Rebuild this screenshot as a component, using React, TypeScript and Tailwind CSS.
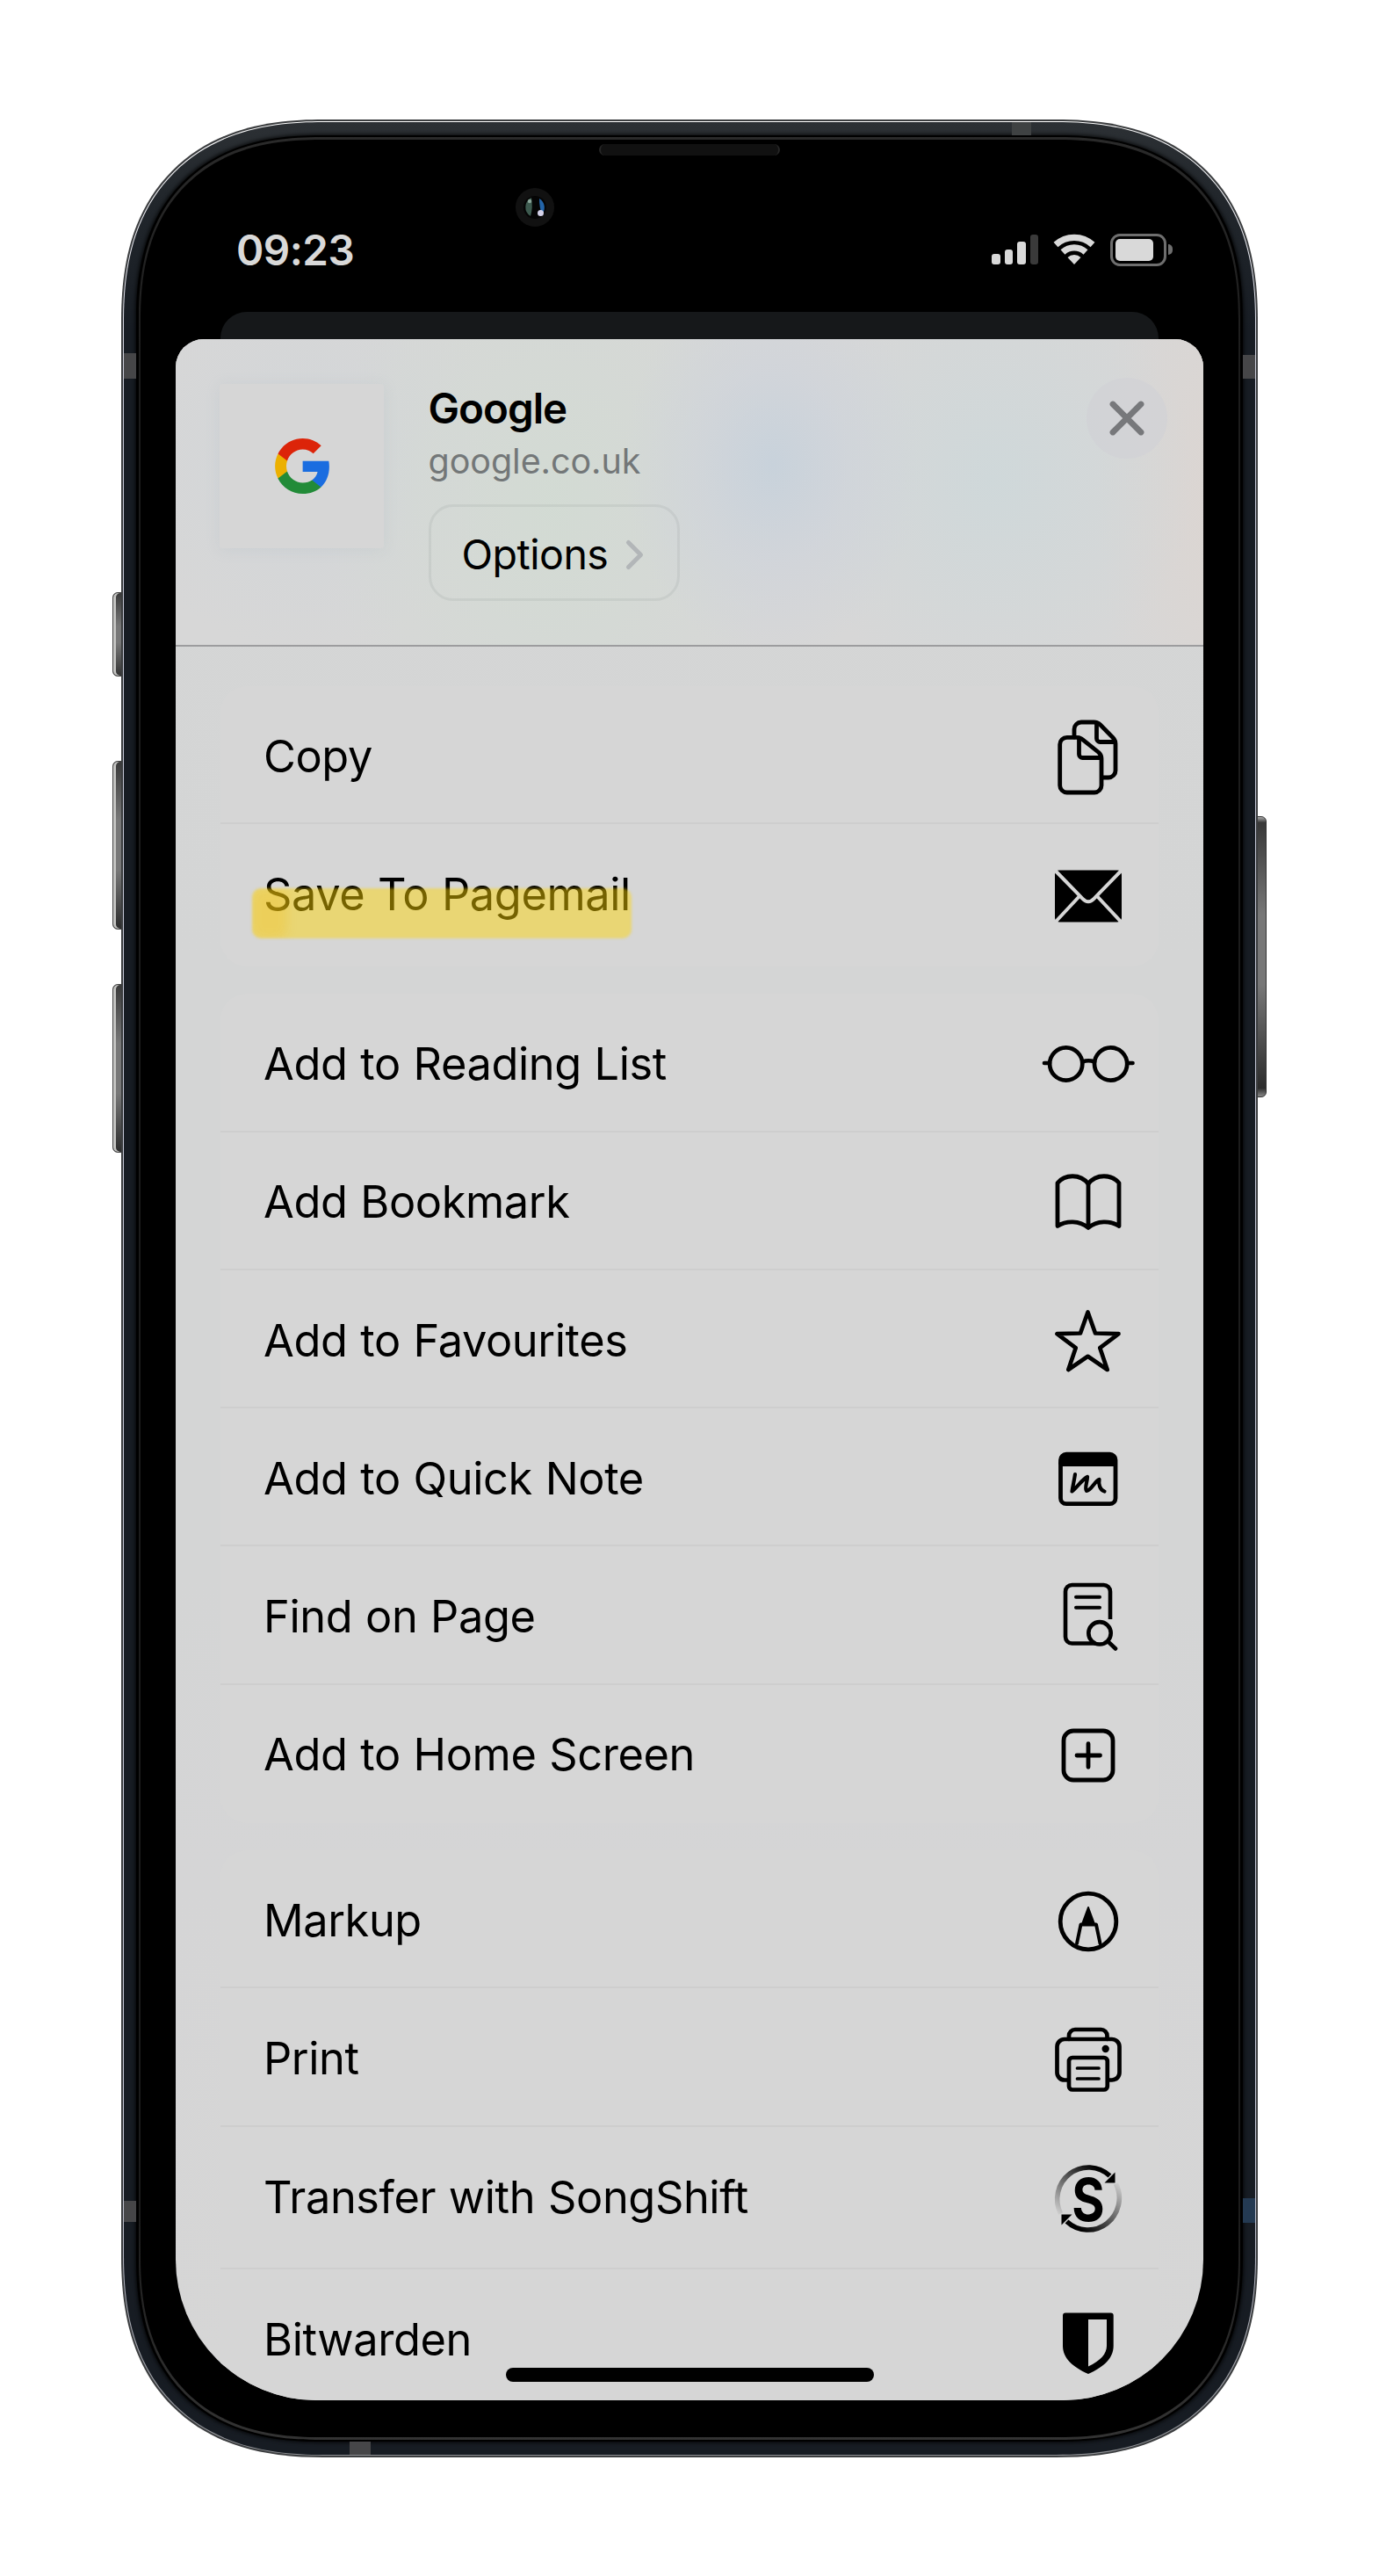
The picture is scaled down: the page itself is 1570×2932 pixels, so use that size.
import React from "react";

const paper = "#d6d6d6";

function Icon({ children, width = 4.8 }: { children: React.ReactNode; width?: number }) {
  return (
    <svg
      width="120"
      height="100"
      viewBox="-60 -50 120 100"
      fill="none"
      stroke="#000"
      strokeWidth={width}
      strokeLinecap="round"
      strokeLinejoin="round"
      className="shrink-0"
    >
      {children}
    </svg>
  );
}

const CopyIcon = () => (
  <Icon>
    <path d="M-16 -21V-30a8 8 0 0 1 8-8H6.500c3 0 5 .8 7 2.800L28 -20.500c2 2 3 4 3 7V17a8 8 0 0 1-8 8H15.500" />
    <path d="M9.500 -37V-19.500a4 4 0 0 0 4 4H30" />
    <path d="M-24.300 -20.700H-13c3 0 5 .8 7 2.800L12 -3.500c2 2 3 4 3 7V34a8 8 0 0 1-8 8H-24.300a8 8 0 0 1-8-8V-12.700a8 8 0 0 1 8-8Z" />
    <path d="M-10.500 -20V-1.500a4 4 0 0 0 4 4H14" />
  </Icon>
);

const MailIcon = () => (
  <Icon>
    <rect x="-38" y="-28.500" width="76" height="59" rx="5" fill="#000" stroke="none" />
    <g stroke={paper} strokeWidth="4" strokeLinecap="butt">
      <path d="M-38 -28.500L-6.500 3.800Q0 10.500 6.500 3.800L38 -28.500" />
      <path d="M-38 31L-10 1M38 31L10 1" />
    </g>
  </Icon>
);

const GlassesIcon = () => (
  <Icon width={4.7}>
    <circle cx="-25.300" cy="1" r="18.600" />
    <circle cx="25.600" cy="1" r="18.600" />
    <path d="M-6.500 -1.500Q0 -4 7 -1.500M-50 0H-44M44.500 0H50.500" />
  </Icon>
);

const BookIcon = () => (
  <Icon>
    <path d="M0 -19.500C-9 -31.500 -27 -30.500 -35 -20.500V28.500C-25 22 -10 22 0 30.500C10 22 25 22 35 28.500V-20.500C27 -30.500 9 -31.500 0 -19.500Z" />
    <path d="M0 -19V29" />
  </Icon>
);

const StarIcon = () => (
  <Icon width={4.7}>
    <path d="M-.5 -31.500L8 -7.500L34.500 -6.800L13.300 9.200L21.700 34L-.5 18.800L-22.700 34L-14.300 9.200L-35.500 -6.800L-9 -7.500Z" />
  </Icon>
);

const QuickNoteIcon = () => (
  <Icon>
    <rect x="-31.500" y="-26.800" width="62.500" height="56.500" rx="6.500" />
    <path d="M-31 -13V-21q0-6 6-6H24.500q6 0 6 6V-13Z" fill="#000" stroke="none" />
    <path d="M-31.500 -16.500H30.500" />
    <path
      d="M-15 -4C-16 3 -17.500 9 -18.500 15.500C-12 10 -7 2 -1 -1C-1 5 -4.500 11 -2 15C4 14 7 4 12.500 2C11.500 7 13 14 18.500 15.500"
      strokeWidth="4.200"
    />
  </Icon>
);

const FindIcon = () => (
  <Icon width={4.6}>
    <path d="M8 31.500H-18.500a7.500 7.500 0 0 1-7.500-7.500V-27.500a7.500 7.500 0 0 1 7.500-7.500H17.500a7.500 7.500 0 0 1 7.500 7.500V4" strokeLinecap="butt" />
    <path d="M-14 -21.300H13M-14 -9.300H13" strokeWidth="4" />
    <circle cx="13" cy="19.800" r="12.700" />
    <path d="M22.500 29.300L31 37.500" />
  </Icon>
);

const PlusIcon = () => (
  <Icon width={4.8}>
    <rect x="-28" y="-26" width="56" height="56" rx="11" />
    <path d="M-13 2H13.500M0 -11.300V15.300" />
  </Icon>
);

const MarkupIcon = () => (
  <Icon>
    <circle cx="0" cy="2" r="31.800" />
    <path d="M0 -14L7 5H-7Z" fill="#000" strokeWidth="2" />
    <path d="M-13 27L-8.500 5.500H9L13.500 27" strokeWidth="3.900" />
  </Icon>
);

const PrinterIcon = () => (
  <Icon width={4.7}>
    <path d="M-22 -21V-25a7 7 0 0 1 7-7H14.500a7 7 0 0 1 7 7V-21" />
    <path d="M-23 25.500H-27a8.500 8.500 0 0 1-8.500-8.500V-12.500a8.500 8.500 0 0 1 8.500-8.500H27a8.500 8.500 0 0 1 8.500 8.500V17a8.500 8.500 0 0 1-8.500 8.500H23" />
    <rect x="-22" y="0" width="43.800" height="36.500" rx="4" />
    <path d="M-12.500 12H12M-12.500 24H12" strokeWidth="3.700" />
    <circle cx="19.700" cy="-10" r="4.200" fill="#000" stroke="none" />
  </Icon>
);

const SongShiftIcon = () => (
  <Icon>
    <defs>
      <linearGradient id="ring" gradientUnits="userSpaceOnUse" x1="8" y1="-36" x2="-34" y2="18">
        <stop offset="0" stopColor="#000" />
        <stop offset="1" stopColor="#cfcfcf" />
      </linearGradient>
    </defs>
    {[0, 180].map((turn) => (
      <g key={turn} transform={`translate(0 .5) rotate(${turn})`}>
        <path d="M24.500 -26A35.700 36.200 0 0 0 -31.500 17" stroke="url(#ring)" strokeWidth="5.600" strokeLinecap="butt" />
        <path d="M30.500 -30V-18H18.500Z" fill="#000" stroke="none" />
      </g>
    ))}
    <text
      x="0"
      y="25.500"
      textAnchor="middle"
      transform="scale(.84 1)"
      fill="#000"
      stroke="none"
      className="font-['Inter',sans-serif] text-[68px] font-bold"
    >
      S
    </text>
  </Icon>
);

const BitwardenIcon = () => (
  <Icon>
    <path
      fillRule="evenodd"
      stroke="none"
      fill="#000"
      d="M-26 -31.500H25.700q3 0 3 3V6C28.700 20 18 30 0 38C-18 30 -29 20 -29 6V-28.500q0-3 3-3ZM0 -24V29.500C14 23 21 15 21 6V-24Z"
    />
  </Icon>
);

type RowItem = { label: string; icon: () => React.ReactElement; marked?: boolean; tall?: boolean };

const groups: RowItem[][] = [
  [
    { label: "Copy", icon: CopyIcon },
    { label: "Save To Pagemail", icon: MailIcon, marked: true, tall: true },
  ],
  [
    { label: "Add to Reading List", icon: GlassesIcon },
    { label: "Add Bookmark", icon: BookIcon },
    { label: "Add to Favourites", icon: StarIcon },
    { label: "Add to Quick Note", icon: QuickNoteIcon },
    { label: "Find on Page", icon: FindIcon },
    { label: "Add to Home Screen", icon: PlusIcon },
  ],
  [
    { label: "Markup", icon: MarkupIcon },
    { label: "Print", icon: PrinterIcon },
    { label: "Transfer with SongShift", icon: SongShiftIcon, tall: true },
    { label: "Bitwarden", icon: BitwardenIcon, tall: true },
  ],
];

function Row({ item, last }: { item: RowItem; last: boolean }) {
  const Glyph = item.icon;
  return (
    <li
      className={`flex items-center justify-between pl-[49px] pr-[20px] ${item.tall ? "h-[162px]" : "h-[157.3px]"} ${
        last ? "" : "shadow-[inset_0_-2px_0_#cecece]"
      }`}
    >
      <span
        className={`relative whitespace-nowrap text-[50.5px] leading-[60px] tracking-[-0.4px] [word-spacing:1px] text-black ${
          item.tall ? "mb-[2px]" : "mt-[2px]"
        }`}
      >
        {item.label}
        {item.marked && (
          <span className="absolute left-[-13px] top-[23px] block h-[57px] w-[432px] overflow-hidden rounded-[10px] bg-[rgba(255,213,0,0.46)] blur-[1.5px]">
            <span className="block h-full w-[40px] rounded-[10px] bg-[rgba(245,190,20,0.28)] blur-[6px]" />
          </span>
        )}
      </span>
      <Glyph />
    </li>
  );
}

function StatusBar() {
  return (
    <div className="flex h-[155px] items-start justify-between pl-[69px] pr-[35px] pt-[57px]">
      <span className="text-[47.5px] font-semibold leading-[56px] tracking-[-0.5px] text-[#d9d9d9]">09:23</span>
      <div className="flex h-[54px] items-center gap-[17px]">
        <div className="flex h-[34px] items-end gap-[5px]">
          <i className="h-[12px] w-[9.5px] rounded-[3px] bg-[#d9d9d9]" />
          <i className="h-[17px] w-[9.5px] rounded-[3px] bg-[#d9d9d9]" />
          <i className="h-[26px] w-[9.5px] rounded-[3px] bg-[#d9d9d9]" />
          <i className="h-[34px] w-[9.5px] rounded-[3px] bg-[#3a3a3a]" />
        </div>
        <svg width="48" height="36" viewBox="-24 -35 48 36" fill="none" stroke="#d9d9d9" strokeWidth="7.200">
          <path d="M-21 -22.500A31 31 0 0 1 21 -22.500" />
          <path d="M-13 -14A19 19 0 0 1 13 -14" />
          <path d="M0 0L-7.500 -8A11 11 0 0 1 7.500 -8Z" fill="#d9d9d9" stroke="none" />
        </svg>
        <div className="flex items-center gap-[2px]">
          <div className="h-[37px] w-[64px] rounded-[11px] border-[3px] border-[#6e6e6e] p-[3px]">
            <div className="h-full w-[43px] rounded-[5px] bg-[#d9d9d9]" />
          </div>
          <div className="h-[12px] w-[5px] rounded-r-full bg-[#6e6e6e]" />
        </div>
      </div>
    </div>
  );
}

function Header() {
  return (
    <header className="flex h-[350px] shrink-0 items-start border-b-2 border-[#9c9c9e] bg-[radial-gradient(ellipse_170px_220px_at_680px_144px,#c8d2db,rgba(205,211,220,.55)_50%,transparent),radial-gradient(ellipse_230px_250px_at_930px_160px,rgba(206,216,218,.9),transparent),radial-gradient(ellipse_260px_360px_at_430px_190px,rgba(210,219,211,.9),transparent),radial-gradient(ellipse_150px_380px_at_1200px_180px,#dcd5d1,transparent),radial-gradient(circle_220px_at_150px_140px,rgba(208,213,217,.7),transparent)] bg-[#d7d7d7] pl-[50px] pr-[41px] pt-[44px]">
      <div className="mt-[7px] flex h-[187px] w-[187px] items-center justify-center rounded-[3px] bg-[#d6d6d6] shadow-[0_2px_16px_rgba(150,170,180,0.16)]">
        <svg width="62" height="63" viewBox="1 1 21.56 22">
          <path fill="#1a6de0" d="M22.560 12.250c0-.78-.07-1.530-.2-2.250H12v4.260h5.920c-.26 1.370-1.040 2.530-2.210 3.310v2.770h3.570c2.080-1.920 3.280-4.740 3.280-8.090z" />
          <path fill="#228b38" d="M12 23c2.970 0 5.460-.98 7.280-2.660l-3.570-2.770c-.98.66-2.230 1.060-3.710 1.060-2.860 0-5.290-1.930-6.160-4.530H2.180v2.840C3.990 20.530 7.700 23 12 23z" />
          <path fill="#ecb000" d="M5.840 14.090c-.22-.66-.35-1.360-.35-2.090s.13-1.430.35-2.090V7.070H2.180C1.430 8.550 1 10.220 1 12s.43 3.450 1.180 4.930l2.850-2.220.81-.62z" />
          <path fill="#dc2409" d="M12 5.380c1.620 0 3.060.56 4.210 1.640l3.150-3.150C17.450 2.090 14.970 1 12 1 7.700 1 3.990 3.470 2.180 7.070l3.660 2.840c.87-2.600 3.300-4.530 6.160-4.530z" />
        </svg>
      </div>
      <div className="ml-[50.5px] mt-[5px] flex flex-col items-start">
        <h1 className="text-[47.5px] font-semibold leading-[60px] tracking-[-1px] text-black">Google</h1>
        <p className="text-[39.5px] leading-[60px] tracking-[-0.05px] text-[#737778]">google.co.uk</p>
        <button className="mt-[19px] flex h-[110px] w-[286px] items-center rounded-[28px] border-[3px] border-[rgba(90,100,95,0.09)] pl-[35px] pt-[3px]">
          <span className="text-[46.5px] leading-[60px] tracking-[-0.5px] text-black">Options</span>
          <svg width="24" height="40" viewBox="0 0 24 40" fill="none" stroke="#b2b6b8" strokeWidth="5" strokeLinecap="round" strokeLinejoin="round" className="ml-[19px]">
            <path d="M4.500 6.500L18.500 20.500L4.500 34.500" />
          </svg>
        </button>
      </div>
      <button aria-label="Close" className="ml-auto flex h-[92px] w-[92px] items-center justify-center rounded-full bg-[rgba(209,209,213,0.6)]">
        <svg width="44" height="44" viewBox="-22 -22 44 44" stroke="#77787b" strokeWidth="6.800" strokeLinecap="round">
          <path d="M-16 -16L16 16M16 -16L-16 16" />
        </svg>
      </button>
    </header>
  );
}

function Screen() {
  return (
    <div className="relative h-[2532px] w-[1170px] overflow-hidden rounded-b-[160px]">
      <StatusBar />
      <div className="mx-[51px] h-[31px] rounded-t-[30px] bg-[#16181a]" />
      <div className="flex h-[2346px] flex-col overflow-hidden rounded-t-[32px] bg-[linear-gradient(180deg,#d5d6d6,#d4d5d5_30%,#d4d5d5_60%,#d5d5d6_75%,#d6d6d6)]">
        <Header />
        <div className="mx-[51px] mt-[45px] flex flex-col gap-[31px]">
          {groups.map((rows, i) => (
            <ul key={i} className="overflow-hidden rounded-[30px] bg-[#d6d6d6]">
              {rows.map((item, j) => (
                <Row key={item.label} item={item} last={j === rows.length - 1} />
              ))}
            </ul>
          ))}
        </div>
      </div>
      <div className="absolute bottom-[21px] left-[376px] h-[16px] w-[419px] rounded-full bg-black" />
    </div>
  );
}

const smooth = "[corner-shape:superellipse(1.25)]";

export default function App() {
  return (
    <main className="flex h-[2932px] w-[1570px] items-start justify-center overflow-hidden bg-white pt-[136px] font-['Inter',sans-serif]">
      <div className="relative">
        {/* Side buttons */}
        <div className="absolute left-[-10px] top-[538px] h-[96px] w-[14px] rounded-l-[6px] border border-[#444] bg-[linear-gradient(180deg,#3a3a3a,#777_40%,#777_60%,#333)] shadow-[inset_3px_0_0_#c4c4c2]" />
        <div className="absolute left-[-10px] top-[730px] h-[192px] w-[14px] rounded-l-[6px] border border-[#444] bg-[linear-gradient(180deg,#3a3a3a,#777_35%,#777_65%,#2c2c2c)] shadow-[inset_3px_0_0_#c4c4c2]" />
        <div className="absolute left-[-10px] top-[984px] h-[192px] w-[14px] rounded-l-[6px] border border-[#444] bg-[linear-gradient(180deg,#3a3a3a,#777_35%,#777_65%,#2c2c2c)] shadow-[inset_3px_0_0_#c4c4c2]" />
        <div className="absolute right-[-10px] top-[793px] h-[320px] w-[14px] rounded-r-[6px] border border-[#333] bg-[linear-gradient(180deg,#aaa,#383838_2%,#777_35%,#777_60%,#2c2c2c_97%,#888)]" />

        <div className={`relative w-[1294px] rounded-[195px] bg-[#3b3d3f] p-[2px] supports-[corner-shape:squircle]:rounded-[230px] ${smooth}`}>
          <div className={`rounded-[193px] bg-[linear-gradient(180deg,#fff,#c5c7d6_12%,#c5c7d6_88%,#8c8e92)] p-px supports-[corner-shape:squircle]:rounded-[228px] ${smooth}`}>
            <div className={`relative rounded-[192px] bg-[linear-gradient(180deg,#2c3034,#22272c_3%,#171c23_9%,#171c23)] px-[14px] py-[15px] supports-[corner-shape:squircle]:rounded-[227px] ${smooth}`}>
              {/* Antenna bands */}
              <i className="absolute left-0 top-[263px] h-[29px] w-[14px] bg-[#464648]" />
              <i className="absolute right-0 top-[265px] h-[27px] w-[14px] bg-[#464648]" />
              <i className="absolute left-[1011px] top-0 h-[15px] w-[22px] bg-[#3f4243]" />
              <i className="absolute bottom-0 left-[257px] h-[15px] w-[24px] bg-[#464648]" />
              <i className="absolute left-0 top-[2366px] h-[24px] w-[14px] bg-[#464648]" />
              <i className="absolute right-0 top-[2363px] h-[28px] w-[14px] bg-[#243a52]" />

              <div className={`rounded-[178px] bg-black px-[3px] py-[2px] shadow-[0_0_4px_1px_rgba(0,0,0,0.8)] supports-[corner-shape:squircle]:rounded-[210px] ${smooth}`}>
                <div className={`rounded-[175px] bg-[linear-gradient(180deg,#2a2a2a,#1c1c1c_10%,#1c1c1c_90%,#333)] px-[2px] py-[3px] supports-[corner-shape:squircle]:rounded-[207px] ${smooth}`}>
                  <div className={`relative rounded-[173px] bg-black px-[40px] pb-[42px] pt-[41px] supports-[corner-shape:squircle]:rounded-[205px] ${smooth}`}>
                    <Screen />
                    {/* Speaker grille and front camera */}
                    <div className="absolute left-[522px] top-[5px] h-[13px] w-[206px] rounded-full border-x-2 border-[#262626] bg-[#111]" />
                    <div className="absolute left-[427px] top-[55px] flex h-[44px] w-[44px] items-center justify-center rounded-full bg-[#111]">
                      <svg width="26" height="26" viewBox="-13 -13 26 26">
                        <circle r="13" fill="#050505" />
                        <path d="M-4 -11A12 12 0 0 0 -5 10Q-2 0 -4 -11Z" fill="#3d5a4f" />
                        <path d="M5 -10A12 12 0 0 1 8 8Q5 0 5 -10Z" fill="#2364a8" />
                        <circle cx="-6" cy="-7" r="2.200" fill="#a9c4b8" opacity=".7" />
                        <circle cx="6.500" cy="6.500" r="3.500" fill="#d5d3ea" />
                      </svg>
                    </div>
                  </div>
                </div>
              </div>
            </div>
          </div>
        </div>
      </div>
    </main>
  );
}
